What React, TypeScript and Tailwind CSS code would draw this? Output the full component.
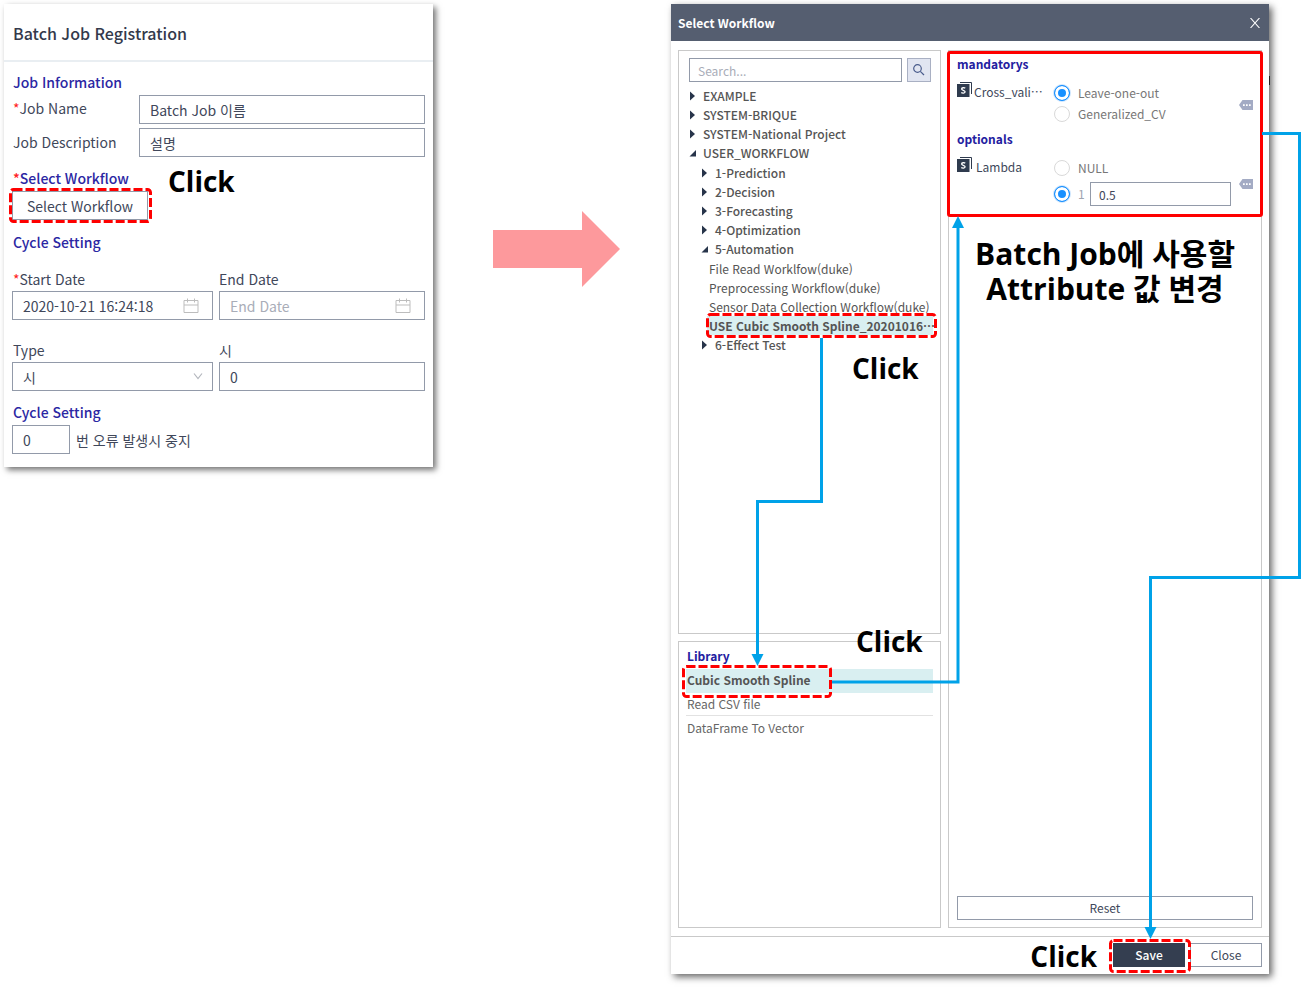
import React from 'react';

const fieldBox = 'w-full border border-[#929aa9] bg-white outline-none text-[#40475a] placeholder:text-[#a9adb8]';
const bigField = `${fieldBox} h-[29px] px-[10px] text-[14px]`;
const groupTitle = 'h-6 text-[14px] leading-6 font-medium text-[#2b27a3]';
const panel = 'border border-[#c9c9c9]';

function DashFrame({ className }: { className: string }) {
  return (
    <span className={`pointer-events-none absolute ${className}`}>
      <svg className="block h-full w-full overflow-visible" aria-hidden="true">
        <rect
          x="1.5"
          y="1.5"
          rx="3"
          className="h-[calc(100%-3px)] w-[calc(100%-3px)]"
          fill="none"
          stroke="#fe0000"
          strokeWidth="3"
          strokeDasharray="9 3"
        />
      </svg>
    </span>
  );
}

function Callout({ className, children }: { className: string; children: React.ReactNode }) {
  return (
    <p
      className={`pointer-events-none absolute z-20 text-center leading-[35px] font-bold whitespace-nowrap text-black font-['Open_Sans','Noto_Sans_CJK_KR',sans-serif] ${className}`}
    >
      {children}
    </p>
  );
}

function CalendarIcon() {
  return (
    <svg className="pointer-events-none absolute top-[7px] right-[14px] h-4 w-4" viewBox="0 0 16 16" fill="none" stroke="#bdbdbd" aria-hidden="true">
      <path d="M1 2.5h14v12H1zM1 7h14M4.5 0.5v4M11.5 0.5v4" />
    </svg>
  );
}

function ParamIcon() {
  return (
    <svg className="h-4 w-4 shrink-0" viewBox="0 0 16 16" aria-hidden="true">
      <path d="M3 .5h11.5V12" fill="none" stroke="#2f3b4e" />
      <rect x="0" y="2" width="12.5" height="13" fill="#2f3b4e" />
      <path d="M8.2 6.2C7.6 5.6 4.6 5.3 4.6 7c0 1.6 3.5 1 3.5 2.8 0 1.7-3 1.5-3.8.7" fill="none" stroke="#fff" strokeWidth="1.3" />
    </svg>
  );
}

function TagIcon() {
  return (
    <svg className="h-[10px] w-[14px] shrink-0" viewBox="0 0 14 10" aria-hidden="true">
      <path d="M3.5 0H14v10H3.5L0 5z" fill="#a3abc4" />
      <path d="M4 4.2h1.7v1.7H4zM7 4.2h1.7v1.7H7zM10 4.2h1.7v1.7H10z" fill="#fff" />
    </svg>
  );
}

function Caret({ open }: { open?: boolean }) {
  return (
    <svg className="h-[10px] w-[6px] shrink-0 overflow-visible" viewBox="0 0 6 10" fill="#27344a" aria-hidden="true">
      {open ? <path d="M6 2v6.5H-.5z" /> : <path d="M0 .5L5 5 0 9.5z" />}
    </svg>
  );
}

function Folder({ name, open, children }: { name: string; open?: boolean; children?: React.ReactNode }) {
  return (
    <li>
      <button type="button" aria-expanded={!!open} className="flex h-[19px] items-center gap-[7px] whitespace-nowrap font-medium">
        <Caret open={open} />
        {name}
      </button>
      {children && <ul className="pt-px">{children}</ul>}
    </li>
  );
}

const radio =
  'm-0 h-4 w-4 shrink-0 appearance-none rounded-full border border-[#d9d9d9] bg-white checked:border-[#1890ff] checked:bg-[#1890ff] checked:shadow-[inset_0_0_0_3px_white,0_0_0_1px_#cfe6fd]';

function Choice({ group, label, checked }: { group: string; label: string; checked?: boolean }) {
  return (
    <label className="flex h-[21px] items-center gap-2 whitespace-nowrap">
      <input type="radio" name={group} defaultChecked={checked} className={radio} />
      {label}
    </label>
  );
}

function Registration() {
  return (
    <section className="relative self-start bg-white shadow-[3px_3px_6px_rgba(0,0,0,0.55)]">
      <h1 className="flex h-[58px] items-center border-b-2 border-[#e9eef2] px-[9px] pt-px text-[16px] font-medium text-[#33394b]">
        Batch Job Registration
      </h1>
      <form className="px-2 pt-2 pb-[13px] text-[14px] leading-6 text-[#40475a]" onSubmit={(e) => e.preventDefault()}>
        <h2 className={`${groupTitle} px-px`}>Job Information</h2>
        <div className="mt-px grid grid-cols-[127px_1fr] items-center gap-y-1">
          <label htmlFor="job-name" className="px-px pb-[3px]"><span className="text-[#ff2020]">*</span>Job Name</label>
          <input id="job-name" className={bigField} defaultValue="Batch Job 이름" />
          <label htmlFor="job-desc" className="px-px pb-[2px]">Job Description</label>
          <input id="job-desc" className={bigField} defaultValue="설명" />
        </div>

        <h2 className={`${groupTitle} mt-[9px] px-px`}><span className="text-[#ff2020]">*</span>Select Workflow</h2>
        <div className="relative mt-px w-fit">
          <button type="button" className="flex h-[29px] min-w-[136px] items-center justify-center border border-[#929aa9] px-3 whitespace-nowrap">Select Workflow</button>
          <DashFrame className="-top-[3px] -right-1 -bottom-[3px] -left-[3px]" />
        </div>

        <h2 className={`${groupTitle} mt-[10px] px-px`}>Cycle Setting</h2>
        <div className="mt-[13px] grid grid-cols-[201fr_206fr] gap-x-[6px] gap-y-[18px]">
          <div>
            <label htmlFor="start" className="block h-6 px-px"><span className="text-[#ff2020]">*</span>Start Date</label>
            <div className="relative h-[29px]">
              <input id="start" className={bigField} defaultValue="2020-10-21 16:24:18" />
              <CalendarIcon />
            </div>
          </div>
          <div>
            <label htmlFor="end" className="block h-6">End Date</label>
            <div className="relative h-[29px]">
              <input id="end" className={bigField} placeholder="End Date" />
              <CalendarIcon />
            </div>
          </div>
          <div>
            <label htmlFor="type" className="block h-6 px-px">Type</label>
            <div className="relative h-[29px]">
              <select id="type" className={`${bigField} appearance-none`} defaultValue="hour">
                <option value="hour">시</option>
              </select>
              <svg className="pointer-events-none absolute top-[11px] right-[10px] h-[7px] w-[10px]" viewBox="0 0 10 7" fill="none" stroke="#b3b6bd" strokeWidth="1.2" aria-hidden="true">
                <path d="M1 .5l4 5 4-5" />
              </svg>
            </div>
          </div>
          <div>
            <label htmlFor="hour" className="block h-6">시</label>
            <input id="hour" className={`${bigField} block`} defaultValue="0" />
          </div>
        </div>

        <h2 className={`${groupTitle} mt-[9px] px-px`}>Cycle Setting</h2>
        <div className="mt-px flex items-center gap-[6px]">
          <div className="w-[58px]">
            <input id="errors" className={`${bigField} block`} defaultValue="0" />
          </div>
          <label htmlFor="errors">번 오류 발생시 중지</label>
        </div>
      </form>
      <Callout className="top-[160px] left-[164px] text-[28px]">Click</Callout>
    </section>
  );
}

function WorkflowTree() {
  return (
    <div className={`${panel} h-[584px] pt-[7px] pr-[7px] pl-[10px]`}>
      <div className="flex gap-[5px] pr-[2px]">
        <input aria-label="Search workflows" placeholder="Search..." className={`${fieldBox} h-6 min-w-0 flex-1 px-2 text-[12px]`} />
        <button type="button" aria-label="Search" className="flex h-6 w-6 items-center justify-center border border-[#a9b0c3] bg-[#e1e5f1]">
          <svg className="h-3 w-3" viewBox="0 0 12 12" fill="none" stroke="#4a5c8c" strokeWidth="1.2" aria-hidden="true">
            <circle cx="4.5" cy="4.5" r="3.8" />
            <path d="M7.3 7.3L11 11" />
          </svg>
        </button>
      </div>
      <ul className="mt-1 pl-px text-[12px] leading-[19px] text-[#555]">
        <Folder name="EXAMPLE" />
        <Folder name="SYSTEM-BRIQUE" />
        <Folder name="SYSTEM-National Project" />
        <Folder name="USER_WORKFLOW" open>
          <li className="pl-3">
            <ul>
              <Folder name="1-Prediction" />
              <Folder name="2-Decision" />
              <Folder name="3-Forecasting" />
              <Folder name="4-Optimization" />
              <Folder name="5-Automation" open>
                <li className="pl-[7px] whitespace-nowrap">File Read Worklfow(duke)</li>
                <li className="pl-[7px] whitespace-nowrap">Preprocessing Workflow(duke)</li>
                <li className="pl-[7px] whitespace-nowrap">Sensor Data Collection Workflow(duke)</li>
                <li className="relative ml-[5px] h-[19px] bg-[#d9eff1] pl-[2px] font-bold whitespace-nowrap">
                  USE Cubic Smooth Spline_20201016…
                  <DashFrame className="-top-[3px] -right-[4px] -bottom-[3px] -left-[1px]" />
                </li>
              </Folder>
              <Folder name="6-Effect Test" />
            </ul>
          </li>
        </Folder>
      </ul>
    </div>
  );
}

function Library() {
  return (
    <div className={`${panel} flex-1 px-[7px] pt-1 text-[12px] text-[#666]`}>
      <h3 className="px-px leading-[20px] font-bold text-[#2320a0]">Library</h3>
      <ul className="mt-[3px] leading-[22px]">
        <li className="relative h-6 bg-[#d9eff1] px-px font-bold text-[#555]">
          Cubic Smooth Spline
          <DashFrame className="-top-1 -bottom-[5px] -left-[4px] w-[150px]" />
        </li>
        <li className="h-[23px] border-b border-[#e2e2e2] px-px">Read CSV file</li>
        <li className="h-6 px-px leading-6">DataFrame To Vector</li>
      </ul>
    </div>
  );
}

function Parameters() {
  return (
    <div className={`${panel} relative flex flex-col px-2 pt-1 pb-[7px] text-[12px] text-[#777]`}>
      <h3 className="h-[18px] leading-[18px] font-bold text-[#2320a0]">mandatorys</h3>
      <div className="mt-[9px] flex items-start">
        <div className="flex w-[97px] gap-px whitespace-nowrap text-[#40475a]">
          <ParamIcon />
          <span className="leading-[20px]">Cross_vali…</span>
        </div>
        <div className="flex flex-1 self-start">
          <div className="flex-1">
            <Choice group="cv" label="Leave-one-out" checked />
            <Choice group="cv" label="Generalized_CV" />
          </div>
          <span className="mt-[18px]"><TagIcon /></span>
        </div>
      </div>
      <h3 className="mt-[6px] h-[18px] leading-[18px] font-bold text-[#2320a0]">optionals</h3>
      <div className="mt-[9px] flex items-start">
        <div className="flex w-[97px] gap-[2px] whitespace-nowrap text-[#40475a]">
          <ParamIcon />
          <span className="pl-px leading-[20px]">Lambda</span>
        </div>
        <div className="flex-1">
          <Choice group="lambda" label="NULL" />
          <div className="mt-1 flex items-center pr-[22px]">
            <label className="flex w-[36px] items-center gap-2 text-[#a0a4b0]">
              <input type="radio" name="lambda" defaultChecked className={radio} />1
            </label>
            <input aria-label="Lambda value" defaultValue="0.5" className={`${fieldBox} h-6 min-w-0 flex-1 px-2 text-[12px]`} />
          </div>
        </div>
        <span className="-ml-[14px] mt-[22px]"><TagIcon /></span>
      </div>
      <button type="button" className="mt-auto h-6 border border-[#929aa9] leading-[22px] text-[#40475a]">Reset</button>
      <span className="pointer-events-none absolute top-0 -right-[2px] -left-[2px] h-[166px] rounded-[3px] border-3 border-[#fe0000]" />
    </div>
  );
}

function WorkflowDialog() {
  return (
    <section role="dialog" aria-label="Select Workflow" className="relative flex flex-col bg-white shadow-[3px_3px_7px_rgba(0,0,0,0.6)]">
      <header className="flex h-[37px] items-center justify-between bg-[#555e70] pr-2 pl-[7px] text-[12px] font-bold text-white">
        <h2>Select Workflow</h2>
        <button type="button" aria-label="Close dialog" className="p-px">
          <svg className="h-[10px] w-[10px]" viewBox="0 0 10 10" fill="none" stroke="#fff" strokeWidth="1.1" aria-hidden="true">
            <path d="M.5 0l9 10M9.5 0l-9 10" />
          </svg>
        </button>
      </header>
      <div className="grid flex-1 grid-cols-[263fr_314fr] gap-[7px] px-[7px] pt-[9px] pb-2">
        <div className="flex min-w-0 flex-col gap-[7px]">
          <WorkflowTree />
          <Library />
        </div>
        <Parameters />
      </div>
      <footer className="flex justify-end gap-[5px] border-t border-[#c9c9c9] px-[7px] pt-[6px] pb-[7px] text-[12px]">
        <div className="relative">
          <button type="button" className="h-6 w-[72px] bg-[#343e50] font-medium text-white">Save</button>
          <DashFrame className="-top-1 -right-[6px] -bottom-[6px] -left-[4px]" />
        </div>
        <button type="button" className="h-6 w-[72px] border border-[#929aa9] leading-[22px] text-[#40475a]">Close</button>
      </footer>

      <svg
        className="pointer-events-none absolute inset-0 z-10 h-full w-full overflow-visible"
        viewBox="0 0 598 970"
        preserveAspectRatio="none"
        aria-hidden="true"
      >
        <g fill="none" stroke="#00a2e8" strokeWidth="3">
          <path d="M150.5 334V497.5H86.5V652" />
          <path d="M161 678H287V224" />
          <path d="M591 129.5H628.5V573.5H479.5V926" />
        </g>
        <g fill="#00a2e8">
          <path d="M80.5 650h12l-6 12z" />
          <path d="M281 224h12l-6-12z" />
          <path d="M473.5 923h12l-6 12z" />
        </g>
        <rect x="598" y="72" width="1" height="9" fill="#222" />
      </svg>
      <Callout className="top-[347px] left-[181px] text-[28px]">Click</Callout>
      <Callout className="top-[620px] left-[185px] text-[28px]">Click</Callout>
      <Callout className="top-[935px] right-[172px] text-[28px]">Click</Callout>
      <Callout className="top-[232px] right-[34px] text-[30px]">
        Batch Job에 사용할
        <br />
        Attribute 값 변경
      </Callout>
    </section>
  );
}

export default function App() {
  return (
    <main
      lang="ko"
      className="grid min-h-screen grid-cols-[429fr_238fr_598fr] bg-white pt-1 pr-8 pb-[17px] pl-1 font-['Noto_Sans_CJK_KR',sans-serif]"
    >
      <Registration />
      <div className="flex justify-center pt-[207px] pl-2">
        <svg className="h-[76px] w-[127px]" viewBox="0 0 127 76" fill="#fd999c" aria-hidden="true">
          <path d="M0 19h89V0l38 38-38 38V57H0z" />
        </svg>
      </div>
      <WorkflowDialog />
    </main>
  );
}
